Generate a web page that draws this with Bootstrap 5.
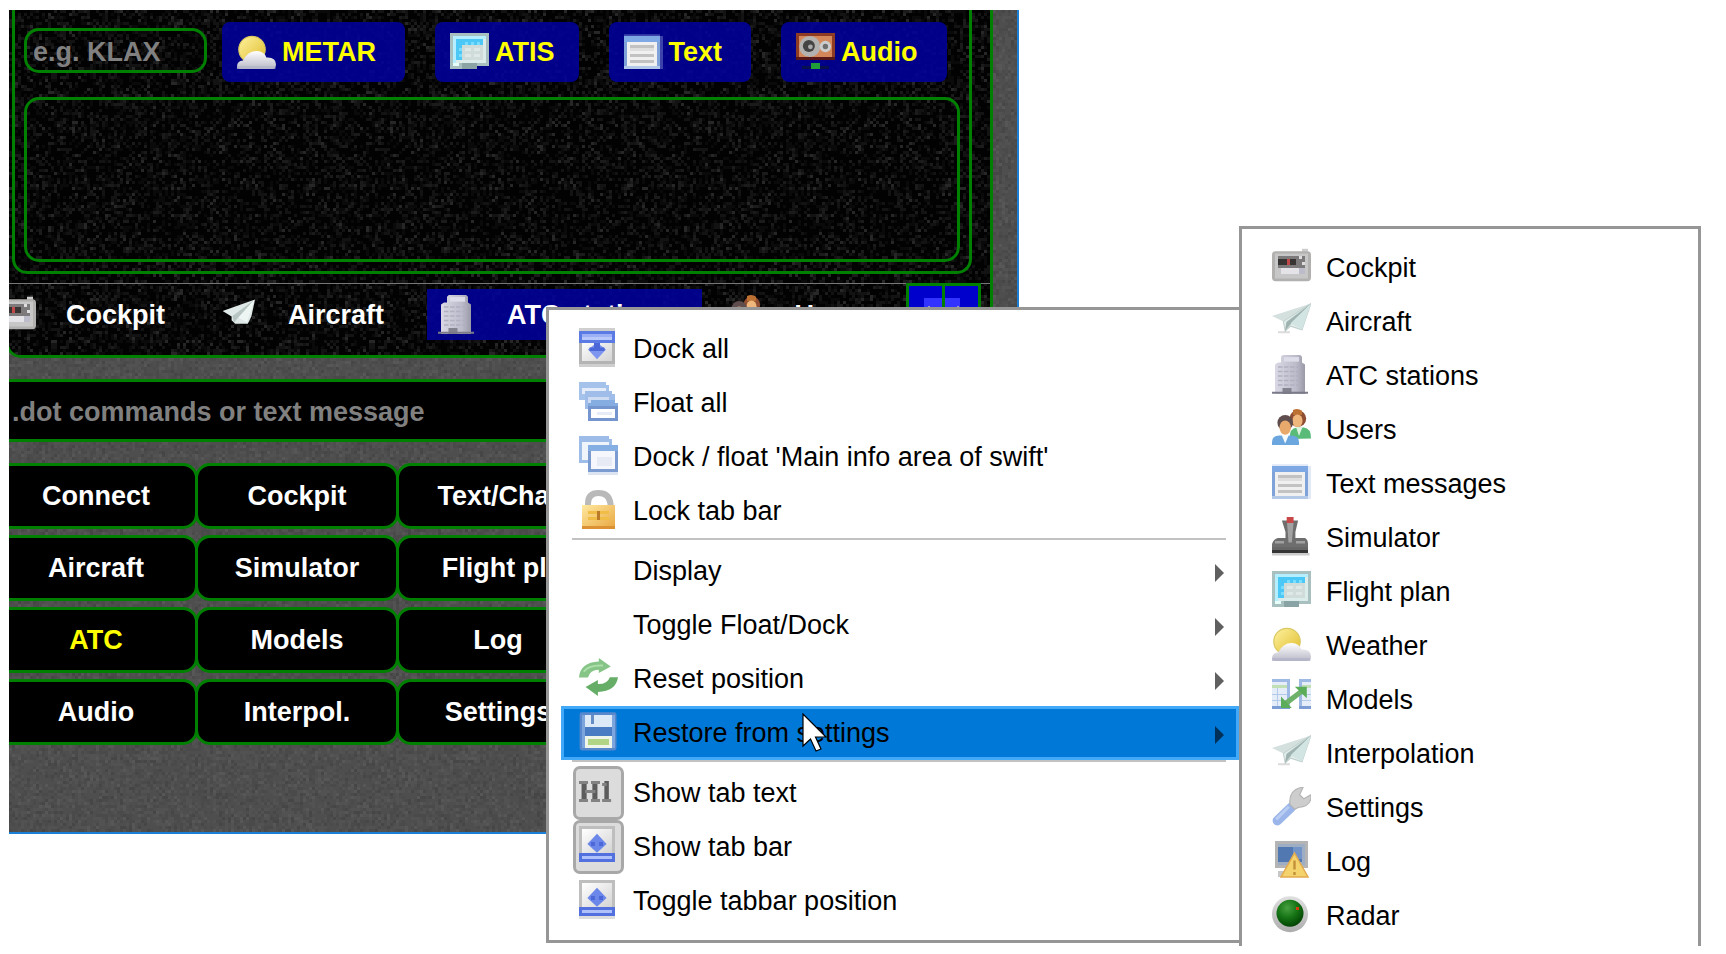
<!DOCTYPE html>
<html lang="en">
<head>
<meta charset="utf-8">
<meta name="viewport" content="width=device-width, initial-scale=1">
<title>swift pilot client</title>
<link href="https://cdn.jsdelivr.net/npm/bootstrap@5.3.0/dist/css/bootstrap.min.css" rel="stylesheet">
<style>
  :root { --line: #008000; --edge: #969696; }
  body { font-family: "Liberation Sans", Arial, sans-serif; font-size: 27px; line-height: 30px; background: #fff; color: #000; min-height: 100vh; overflow: hidden; }
  .pixicon { width: 39px; height: 39px; flex: none; display: block; }
  .texture { position: absolute; inset: 0; width: 100%; height: 100%; z-index: -1; }

  .client { margin: 10px 0 0 9px; max-width: 1010px; border: solid #1c7fd6; border-width: 0 2px 2px 0; padding-bottom: 87px; overflow: hidden; position: relative; z-index: 0; font-weight: 700; }
  .info-frame { margin: 0 24px 0 -3px; padding: 0 18px 0 3px; border: 3px solid var(--line); border-top: 0; border-radius: 0 0 15px 15px; overflow: hidden; position: relative; z-index: 0; background: #000; }
  .station-panel { border: 3px solid var(--line); border-top: 0; border-radius: 0 0 15px 15px; padding: 12px 9px 9px; }
  .station-tools { gap: 30px; }
  .code-field { width: 183px; height: 45px; margin: 6px -15px 0 0; padding: 3px 6px 0; background: transparent; border: 3px solid var(--line); border-radius: 15px; color: #fff; font-weight: 700; }
  .code-field::placeholder, .command-line::placeholder { color: #808080; opacity: 1; }
  .tool-btn { height: 60px; padding: 0 29px 0 15px; gap: 6px; border: 0; border-radius: 8px; background: rgba(0, 0, 160, .86); color: #ff0; font-weight: 700; }
  .report { display: block; width: 100%; height: 165px; margin-top: 15px; background: transparent; border: 3px solid var(--line); border-radius: 15px; resize: none; color: #fff; }
  .tab-strip { margin: 9px -18px 0 -3px; border-top: 1px solid #777; padding: 5px 0 15px; position: relative; }
  .tab-row { margin-left: -23px; gap: 13px; }
  .tab-btn { height: 51px; padding: 0 30px 0 11px; gap: 30px; border: 0; background: transparent; color: #fff; font-weight: 700; white-space: nowrap; flex: none; }
  .tab-btn.active { background: rgba(0, 0, 160, .86); }
  .dock-pair { position: absolute; top: -1px; right: 9px; width: 75px; height: 60px; background: #00c; border: 3px solid var(--line); }
  .dock-pair svg { width: 69px; height: 54px; display: block; }
  .command-line { display: block; width: 1007px; height: 63px; margin: 21px 0 21px -15px; padding: 4px 15px 0; background: #000; border: 3px solid var(--line); border-radius: 15px; color: #fff; font-weight: 700; }
  .page-grid { margin: 0 18px 0 -15px; row-gap: 6px; }
  .page-btn { display: block; width: calc(100% + 3px); height: 66px; padding: 0; background: #000; border: 3px solid var(--line); border-radius: 15px; color: #fff; font-weight: 700; white-space: nowrap; }
  .page-btn.current { color: #ff0; }

  .popup { position: absolute; margin: 0; list-style: none; background: #fff; border: 3px solid var(--edge); padding: 12px 0 12px 12px; }
  .main-popup { left: 546px; top: 307px; width: 696px; z-index: 2; }
  .side-popup { left: 1239px; top: 226px; width: 462px; padding-bottom: 3px; border-bottom: 0; z-index: 3; }
  .entry { display: flex; width: 100%; height: 54px; padding: 6px 15px 0 18px; border: 0; background: transparent; text-align: left; color: #000; line-height: 42px; white-space: nowrap; position: relative; }
  .entry .pixicon, .entry .icon-space { margin-right: 15px; }
  .icon-space { width: 39px; flex: none; }
  .entry .label-text { flex: 1; position: relative; }
  .arrow { width: 9px; height: 18px; margin-top: 14px; fill: #606060; }
  .entry.chosen { background: #0078d7; box-shadow: inset 0 0 0 3px #42a8f8; }
  .entry.chosen .arrow { fill: #003058; }
  .entry.checked::before { content: ""; position: absolute; left: 12px; top: 0; width: 51px; height: 54px; background: #dcdcdc; border: 3px solid #a8a8a8; border-radius: 7px; }
  .entry.checked .pixicon { position: relative; }
  .rule { height: 6px; margin: 0 13px 0 11px; border-top: 2px solid #c2c2c2; }
  .pointer { position: absolute; left: 802px; top: 713px; width: 27px; height: 40px; z-index: 4; pointer-events: none; }
</style>
</head>
<body class="position-relative">

<svg width="0" height="0" class="position-absolute" aria-hidden="true">
  <defs>
    <pattern id="grain-dark" width="318" height="270" patternUnits="userSpaceOnUse"></pattern>
    <pattern id="grain-grey" width="318" height="270" patternUnits="userSpaceOnUse"></pattern>
    <linearGradient id="g-sun" x2="1" y2="1"><stop stop-color="#fff2a0"/><stop offset="1" stop-color="#dfbd2c"/></linearGradient>
    <linearGradient id="g-cloud" x2="0" y2="1"><stop stop-color="#fff"/><stop offset="1" stop-color="#b9b9c8"/></linearGradient>
    <linearGradient id="g-lock" x2="1" y2="1"><stop stop-color="#ffe9a0"/><stop offset="1" stop-color="#e8a640"/></linearGradient>
    <linearGradient id="g-box" x2="1" y2="1"><stop stop-color="#fff"/><stop offset="1" stop-color="#d4d4d4"/></linearGradient>
    <linearGradient id="g-bld" x2="1" y2="0"><stop stop-color="#d9d8e4"/><stop offset=".7" stop-color="#bcbbca"/><stop offset="1" stop-color="#9a99a8"/></linearGradient>
    <radialGradient id="g-radar" cx=".4" cy=".3" r=".7"><stop stop-color="#48a040"/><stop offset=".55" stop-color="#147214"/><stop offset="1" stop-color="#044404"/></radialGradient>
    <linearGradient id="g-ring" x2="0" y2="1"><stop stop-color="#e0e0e0"/><stop offset="1" stop-color="#acacac"/></linearGradient>
  </defs>

  <symbol id="i-weather" viewBox="0 0 13 13">
    <circle cx="5" cy="5.5" r="4.4" fill="url(#g-sun)" stroke="#d9c860" stroke-width=".4"/>
    <path d="M0 11.2Q0 9.4 2 9.2Q3.6 6 6.6 6Q9 6 9.8 8.2Q12.9 8 13 10.4Q13 12 11.5 12H1.4Q0 12 0 11.2z" fill="url(#g-cloud)"/>
    <path d="M0 11H12.800V12H0z" fill="#b4b4c8" opacity=".8"/>
  </symbol>
  <symbol id="i-plan" viewBox="0 0 13 13">
    <g shape-rendering="crispEdges"><path d="M0 0h13v11h-4v1h-5v0h-4z" fill="#a9c0c0"/><path d="M1 1h11v9h-11z" fill="#dcecea"/><path d="M1 1h11v1h-11z" fill="#b4eeff"/><path d="M1 2h1v8h-1z" fill="#b4eeff"/><path d="M2 2h9v2h-7v5h-2z" fill="#4cc8f6"/><path d="M5 3h1v1h-1zM7 3h1v1h-1zM9 3h1v1h-1zM3 5h1v1h-1zM3 7h1v1h-1z" fill="#7adcfe"/><path d="M4 4h7v5h-7z" fill="#cfdcda"/><path d="M5 5h2v1h-2zM8 5h2v1h-2zM5 7h2v1h-2zM8 7h2v1h-2z" fill="#dee8e6"/><path d="M1 10h2v1h-2z" fill="#e6fff8"/><path d="M4 10h5v2h-5z" fill="#8aa3a5"/></g>
  </symbol>
  <symbol id="i-text" viewBox="0 0 13 13">
    <g shape-rendering="crispEdges"><path d="M0 1h12v11h-12z" fill="#7fa2d8"/><path d="M0 1h12v2h-12z" fill="#7da8e4"/><path d="M0 11h12v1h-12z" fill="#b4c8e8"/><path d="M1 3h10v8h-10z" fill="#f0f0f0"/><path d="M2 4h8v1h-8zM2 7h8v1h-8zM2 9h8v1h-8z" fill="#c2c2c2"/><path d="M2 5h8v1h-8z" fill="#dfdfdf"/></g><path d="M12 1h1v11h-1zM0 .4h12v.6h-12z" fill="#a9c0e8" opacity=".35"/>
  </symbol>
  <symbol id="i-audio" viewBox="0 0 13 13">
    <g shape-rendering="crispEdges"><path d="M0 0h13v9h-13z" fill="#8e3d24"/><path d="M1 1h11v7h-11z" fill="#d4875a"/><path d="M0 8h13v1h-13z" fill="#581818"/><path d="M2 11h9v1h-9z" fill="#081050"/><path d="M5 10h3v2h-3z" fill="#209c38"/></g>
    <circle cx="4.6" cy="4.5" r="3.5" fill="#b4b2b0"/><circle cx="4.3" cy="4.3" r="2" fill="#444"/><circle cx="4.8" cy="4.6" r=".8" fill="#aaa"/><circle cx="9.8" cy="4.5" r="1.9" fill="#ccc"/><circle cx="9.8" cy="4.5" r=".9" fill="#6f6f6f"/>
  </symbol>
  <symbol id="i-cockpit" viewBox="0 0 13 13">
    <path d="M10 .6h2v1h-2z" fill="#ccc"/><rect y="1.4" width="13" height="10" rx="1.2" fill="#b2b1b0"/><rect x="1" y="2.2" width="11" height="8.300" fill="#c8c7c7"/>
    <g shape-rendering="crispEdges"><path d="M2 3h9v4h-9z" fill="#7c7a7a"/><path d="M2 4h3v2h-3zM6 4h2v2h-2z" fill="#383434"/><path d="M5 4h1v2h-1z" fill="#c04848"/><path d="M9 3h1v1h-1zM10 5h1v1h-1z" fill="#dedede"/><path d="M3 7h7v2h-7z" fill="#e4e4e8"/><path d="M9 7h2v2h-2z" fill="#bcbccb"/></g>
  </symbol>
  <symbol id="i-plane" viewBox="0 0 13 13">
    <path d="M13 .8L0 5L3.8 6.8z" fill="#d3e0dd"/><path d="M13 .8L3.8 6.8L4.4 10L6.2 8.4L10 9.6z" fill="#e2eeec" stroke="#c0d0cd" stroke-width=".35"/><path d="M13 .8L4.8 7L4.3 10L6 8z" fill="#9fb3b0"/><path d="M13 .8L6.2 7.4L10 9.5z" fill="#d3e5e2"/><path d="M2 10.4h4" stroke="#aaa" stroke-width=".7" opacity=".4"/>
  </symbol>
  <symbol id="i-plane-lit" viewBox="0 0 13 13">
    <path d="M12 1.500L1.200 5.300L4.200 7.200V8.400L5.400 9.600H9.600L10.800 7.200z" fill="#dfe9e7"/><path d="M11.800 1.600L4.500 7L5 9.200L6 8z" fill="#b7c6c3"/><path d="M11.800 1.600L6.500 7.500L9.300 9.200z" fill="#eef6f4"/>
  </symbol>
  <symbol id="i-tower" viewBox="0 0 13 13">
    <path d="M3 2.5V.6L3.600 0H9.400L10 .6V2.5L11 3.200V13H1V3.200L2 2.500z" fill="url(#g-bld)"/>
    <path d="M4 .7h5v1.500h-5z" fill="#ddddea"/><path d="M2 4h8M2 5.500h8M2 7h8M2 8.500h8M2 10h8" stroke="#b1b0c1" stroke-width=".5" stroke-dasharray="1.500 .5"/>
    <path d="M3.500 11h3v2h-3z" fill="#83828f"/><path d="M0 12.600h12" stroke="#7b7a89" stroke-width=".7"/>
  </symbol>
  <symbol id="i-users" viewBox="0 0 13 13">
    <path d="M6 10Q5.6 6.4 8.4 6.2H10.6Q13 6.4 13 9.8z" fill="#58bb78"/><circle cx="8.6" cy="3.2" r="2.8" fill="#8f4d32"/><path d="M7 .3Q8.7-.4 10 .6L10 2H7z" fill="#bc7133"/><ellipse cx="8.5" cy="3.9" rx="1.7" ry="2.1" fill="#efb77c"/><path d="M8 6l1 3 1.2-3z" fill="#dff2df"/>
    <path d="M0 12V11Q0 8.8 2.4 8.8H6.5Q9 8.8 9 11V12z" fill="#6ba7de"/><circle cx="4.4" cy="4.6" r="2.6" fill="#5e4d4c"/><ellipse cx="4.4" cy="6.2" rx="1.9" ry="2.4" fill="#e9a96c"/><path d="M3.2 8.7l1.2 2.8 1.2-2.8z" fill="#f6fbff"/>
  </symbol>
  <symbol id="i-stick" viewBox="0 0 13 13">
    <path d="M3.300 1.200H8.700L7.800 5V7H11Q12 7.500 12 9V10.400H0V9Q.5 7.300 2 7H4.500V5z" fill="#6e6e6e"/><path d="M5 1.800H7.2L6.600 8.500H5.500z" fill="#a2a2a2"/><path d="M4.900 0h2.300v2H4.900z" fill="#c84848"/><path d="M1 8.400h3M8 8.400h3" stroke="#a0a0a0" stroke-width=".8"/><path d="M0 11h12v1H0z" fill="#353535"/><path d="M0 10.500h12" stroke="#666" stroke-width="1"/><path d="M0 12.400h12.500" stroke="#ccc" stroke-width=".8"/>
  </symbol>
  <symbol id="i-models" viewBox="0 0 13 13">
    <g shape-rendering="crispEdges"><path d="M0 0h6v10h-6zM9 0h4v10h-4z" fill="#9db9e4"/><path d="M0 1h5v8h-5zM10 1h3v8h-3z" fill="#e4edf8"/><path d="M0 2h5v1h-5zM10 2h3v1h-3z" fill="#c0dfb4"/><path d="M0 5h5v.4h-5zM0 7h5v.4h-5zM1.6 3h.4v6h-.4zM10 5h3v.4h-3zM10 7h3v.4h-3z" fill="#b4cbea"/><path d="M0 9h6v1h-6zM9 9h4v1h-4z" fill="#7d9ed4"/></g>
    <path d="M4.500 8.200L10 4" stroke="#6db268" stroke-width="1.700"/><path d="M7.600 2.600h4v3.800zM3 5.800v3.900h3.600z" fill="#5cad5a"/>
  </symbol>
  <symbol id="i-wrench" viewBox="0 0 13 13">
    <path d="M1.800 11.2L6.4 6.8" stroke="#9ab5e9" stroke-width="3.200" stroke-linecap="round"/><path d="M1.400 10.800L5.600 6.600" stroke="#b9ccf3" stroke-width="1"/><path d="M6 5.800Q5.400 .8 10.400 0L9.200 2.600L10.600 3.900L13 2.600Q13.300 6.400 8.800 6.800L7.600 7.400z" fill="#cdcdcd" stroke="#b5b5b5" stroke-width=".4"/>
  </symbol>
  <symbol id="i-log" viewBox="0 0 13 13">
    <g shape-rendering="crispEdges"><path d="M1 0h11v9h-11z" fill="#b4b4b4"/><path d="M2 1h9v7h-9z" fill="#9daec4"/><path d="M2 2h8v5h-8z" fill="#5278b2"/><path d="M7 2h3v4h-3z" fill="#7193c6"/><path d="M2 10h3v2h-3z" fill="#c7c7c7"/></g>
    <path d="M7.500 4L12 12H3z" fill="#f4d26c" stroke="#e2ab4e" stroke-width=".5"/><path d="M7.500 6.500v3M7.500 10.300v1" stroke="#c29139" stroke-width=".8"/>
  </symbol>
  <symbol id="i-radar" viewBox="0 0 13 13"><circle cx="6" cy="6.4" r="6" fill="url(#g-ring)"/><circle cx="6" cy="6.1" r="4.500" fill="url(#g-radar)"/><path d="M8 4h1v1h-1z" fill="#d43c10"/></symbol>
  <symbol id="i-dock" viewBox="0 0 13 13">
    <g shape-rendering="crispEdges"><path d="M0 0h12v13h-12z" fill="#cfcfcf"/><path d="M0 4h12v8h-12z" fill="#b4b4b4"/><path d="M1 4h10v7h-10z" fill="url(#g-box)"/><path d="M0 1h12v4h-12z" fill="#5c7ae4"/><path d="M1 2h10v1h-10z" fill="#9cb1f5"/><path d="M1 3h10v1h-10z" fill="#b9c8fa"/></g>
    <path d="M6 4.800L9 7.200L6 10.400L3 7.200z" fill="#7d95ee"/><path d="M5 5h2v1.500h1.500v1.200h-5v-1.200h1.500z" fill="#4c68d8"/>
  </symbol>
  <symbol id="i-undock" viewBox="0 0 13 13">
    <g shape-rendering="crispEdges"><path d="M0 0h12v12h-12z" fill="#bebebe"/><path d="M1 1h10v8h-10z" fill="url(#g-box)"/><path d="M0 9h12v3h-12z" fill="#5271de"/><path d="M1 10h10v1h-10z" fill="#afc1fb"/><path d="M0 12h12v1h-12z" fill="#ddd"/></g>
    <path d="M6 2.600L9.200 6L6 8.900L2.800 6z" fill="#6c87ea"/><path d="M4 5.300h1.300v1.400h-1.300zM6.700 5.300h1.300v1.400h-1.300z" fill="#4c68d8"/>
  </symbol>
  <symbol id="i-float" viewBox="0 0 13 13">
    <g shape-rendering="crispEdges"><path d="M0 0h9v1h1v5h-10z" fill="#a4c2ea"/><path d="M1 2h8v2h-8z" fill="#e3ecf8"/><path d="M2 3h9v1h1v5h-10z" fill="#9fbde8"/><path d="M3 5h7v3h-7z" fill="#cddcf2"/><path d="M3 7h10v6h-10z" fill="#7495cd"/><path d="M4 6h8v1h-8zM3 7h10v1h-10z" fill="#85ade1"/><path d="M4 9h8v3h-8z" fill="#fff"/><path d="M6 10h5v1h-5z" fill="#e5ecf8"/></g>
  </symbol>
  <symbol id="i-windows" viewBox="0 0 13 13">
    <g shape-rendering="crispEdges"><path d="M0 0h10v1h1v8h-11z" fill="#9dbde8"/><path d="M1 2h9v6h-9z" fill="#eff4fb"/><path d="M3 3h10v9h-10z" fill="#7b9bd1"/><path d="M3 3h10v2h-10z" fill="#85aee2"/><path d="M4 5h8v6h-8z" fill="#f5f7fc"/><path d="M6 7h5v3h-5z" fill="#e5eaf5"/><path d="M3 12h10v1h-10z" fill="#dce4f1"/></g>
  </symbol>
  <symbol id="i-lock" viewBox="0 0 13 13">
    <path d="M3 6V4.500Q3 1 6.500 1T10.500 4.500V6" fill="none" stroke="#b9b9b9" stroke-width="2"/>
    <g shape-rendering="crispEdges"><path d="M1 5h11v8h-11z" fill="url(#g-lock)"/><path d="M1 12h11v1h-11z" fill="#dd9135"/><path d="M3 7h3v1h-3zM7 7h3v1h-3zM3 9h3v1h-3zM7 9h3v1h-3z" fill="#f0bd46"/><path d="M6 7h1v3h-1z" fill="#bb7a28"/></g>
  </symbol>
  <symbol id="i-reset" viewBox="0 0 13 13">
    <path d="M0 6.500Q.4 1.500 6.600 1.200V0L10.600 2.800L6.600 5V3.900Q3.600 4 3 6.500z" fill="#86c587"/><path d="M13 6.400Q12.400 11 6.300 11.300V12.700L2.200 9.700L6.300 7.300V8.700Q9.400 8.800 10.300 6.400z" fill="#66ae67"/><path d="M1.600 4.600Q3 2.300 8 2.500" fill="none" stroke="#addfa9" stroke-width=".7"/>
  </symbol>
  <symbol id="i-save" viewBox="0 0 13 13">
    <rect x=".2" y=".1" width="12.300" height="12.700" rx=".8" fill="#5888cc"/><g shape-rendering="crispEdges"><path d="M1 1h11v11h-11z" fill="#7ba5dc"/><path d="M2 1h9v4h-9z" fill="#dce9f6"/><path d="M4 1h1v3h-1z" fill="#668ec4"/><path d="M2 5h9v3h-9z" fill="#4a7cc3"/><path d="M2 8h9v4h-9z" fill="#f0f5e9"/><path d="M3 9h7v2h-7z" fill="#b1d585"/></g>
  </symbol>
  <symbol id="i-heading" viewBox="0 0 13 13">
    <path d="M1.700 3v7M5.300 3v7" stroke="#5c5c5c" stroke-width="1.700"/><path d="M0 3.500h3M0 9.500h3M4 3.500h3M4 9.500h3M2 6.500h3.500" stroke="#828282" stroke-width="1"/><path d="M9.200 3v7" stroke="#5c5c5c" stroke-width="1.500"/><path d="M7.700 4.200h1.500M7.700 9.500h3" stroke="#828282" stroke-width="1"/>
  </symbol>
</svg>

<main class="client">
  <svg class="texture" aria-hidden="true"><rect width="100%" height="100%" fill="url(#grain-grey)"/></svg>

  <section class="info-frame">
    <svg class="texture" aria-hidden="true"><rect width="100%" height="100%" fill="url(#grain-dark)"/></svg>
    <div class="station-panel">
      <div class="station-tools d-flex align-items-start">
        <input class="code-field" type="text" placeholder="e.g. KLAX" aria-label="Airport code">
        <button type="button" class="tool-btn d-flex align-items-center"><svg class="pixicon"><use href="#i-weather"/></svg>METAR</button>
        <button type="button" class="tool-btn d-flex align-items-center pe-4"><svg class="pixicon"><use href="#i-plan"/></svg>ATIS</button>
        <button type="button" class="tool-btn d-flex align-items-center"><svg class="pixicon"><use href="#i-text"/></svg>Text</button>
        <button type="button" class="tool-btn d-flex align-items-center"><svg class="pixicon"><use href="#i-audio"/></svg>Audio</button>
      </div>
      <textarea class="report" aria-label="Station report" readonly></textarea>
    </div>
    <nav class="tab-strip" aria-label="Info areas">
      <div class="tab-row d-flex">
        <button type="button" class="tab-btn d-flex align-items-center"><svg class="pixicon"><use href="#i-cockpit"/></svg>Cockpit</button>
        <button type="button" class="tab-btn d-flex align-items-center"><svg class="pixicon"><use href="#i-plane-lit"/></svg>Aircraft</button>
        <button type="button" class="tab-btn active d-flex align-items-center"><svg class="pixicon"><use href="#i-tower"/></svg>ATC stations</button>
        <button type="button" class="tab-btn d-flex align-items-center"><svg class="pixicon"><use href="#i-users"/></svg>Users</button>
      </div>
      <div class="dock-pair"><svg viewBox="0 0 69 54" aria-hidden="true"><path d="M15 12h36v36H15z" fill="#3333ff"/><path d="M19 21h2M48 21h2" stroke="#99c" stroke-width="2"/><path d="M33 0h3v54h-3z" fill="#008000"/></svg></div>
    </nav>
  </section>

  <input class="command-line" type="text" placeholder=".dot commands or text message" aria-label="Command line">

  <div class="page-grid d-flex flex-column">
    <div class="row row-cols-5 g-0">
      <div class="col"><button type="button" class="page-btn">Connect</button></div>
      <div class="col"><button type="button" class="page-btn">Cockpit</button></div>
      <div class="col"><button type="button" class="page-btn">Text/Chat</button></div>
    </div>
    <div class="row row-cols-5 g-0">
      <div class="col"><button type="button" class="page-btn">Aircraft</button></div>
      <div class="col"><button type="button" class="page-btn">Simulator</button></div>
      <div class="col"><button type="button" class="page-btn">Flight pl.</button></div>
    </div>
    <div class="row row-cols-5 g-0">
      <div class="col"><button type="button" class="page-btn current">ATC</button></div>
      <div class="col"><button type="button" class="page-btn">Models</button></div>
      <div class="col"><button type="button" class="page-btn">Log</button></div>
    </div>
    <div class="row row-cols-5 g-0">
      <div class="col"><button type="button" class="page-btn">Audio</button></div>
      <div class="col"><button type="button" class="page-btn">Interpol.</button></div>
      <div class="col"><button type="button" class="page-btn">Settings</button></div>
    </div>
  </div>
</main>

<ul class="popup main-popup">
  <li><button type="button" class="entry"><svg class="pixicon"><use href="#i-dock"/></svg><span class="label-text">Dock all</span></button></li>
  <li><button type="button" class="entry"><svg class="pixicon"><use href="#i-float"/></svg><span class="label-text">Float all</span></button></li>
  <li><button type="button" class="entry"><svg class="pixicon"><use href="#i-windows"/></svg><span class="label-text">Dock / float 'Main info area of swift'</span></button></li>
  <li><button type="button" class="entry"><svg class="pixicon"><use href="#i-lock"/></svg><span class="label-text">Lock tab bar</span></button></li>
  <li class="rule" role="separator"></li>
  <li><button type="button" class="entry"><span class="icon-space"></span><span class="label-text">Display</span><svg class="arrow" viewBox="0 0 9 18"><path d="M0 0L9 9L0 18z"/></svg></button></li>
  <li><button type="button" class="entry"><span class="icon-space"></span><span class="label-text">Toggle Float/Dock</span><svg class="arrow" viewBox="0 0 9 18"><path d="M0 0L9 9L0 18z"/></svg></button></li>
  <li><button type="button" class="entry"><svg class="pixicon"><use href="#i-reset"/></svg><span class="label-text">Reset position</span><svg class="arrow" viewBox="0 0 9 18"><path d="M0 0L9 9L0 18z"/></svg></button></li>
  <li><button type="button" class="entry chosen" aria-expanded="true"><svg class="pixicon"><use href="#i-save"/></svg><span class="label-text">Restore from settings</span><svg class="arrow" viewBox="0 0 9 18"><path d="M0 0L9 9L0 18z"/></svg></button></li>
  <li class="rule" role="separator"></li>
  <li><button type="button" class="entry checked" aria-pressed="true"><svg class="pixicon"><use href="#i-heading"/></svg><span class="label-text">Show tab text</span></button></li>
  <li><button type="button" class="entry checked" aria-pressed="true"><svg class="pixicon"><use href="#i-undock"/></svg><span class="label-text">Show tab bar</span></button></li>
  <li><button type="button" class="entry"><svg class="pixicon"><use href="#i-undock"/></svg><span class="label-text">Toggle tabbar position</span></button></li>
</ul>

<ul class="popup side-popup">
  <li><button type="button" class="entry"><svg class="pixicon"><use href="#i-cockpit"/></svg><span class="label-text">Cockpit</span></button></li>
  <li><button type="button" class="entry"><svg class="pixicon"><use href="#i-plane"/></svg><span class="label-text">Aircraft</span></button></li>
  <li><button type="button" class="entry"><svg class="pixicon"><use href="#i-tower"/></svg><span class="label-text">ATC stations</span></button></li>
  <li><button type="button" class="entry"><svg class="pixicon"><use href="#i-users"/></svg><span class="label-text">Users</span></button></li>
  <li><button type="button" class="entry"><svg class="pixicon"><use href="#i-text"/></svg><span class="label-text">Text messages</span></button></li>
  <li><button type="button" class="entry"><svg class="pixicon"><use href="#i-stick"/></svg><span class="label-text">Simulator</span></button></li>
  <li><button type="button" class="entry"><svg class="pixicon"><use href="#i-plan"/></svg><span class="label-text">Flight plan</span></button></li>
  <li><button type="button" class="entry"><svg class="pixicon"><use href="#i-weather"/></svg><span class="label-text">Weather</span></button></li>
  <li><button type="button" class="entry"><svg class="pixicon"><use href="#i-models"/></svg><span class="label-text">Models</span></button></li>
  <li><button type="button" class="entry"><svg class="pixicon"><use href="#i-plane"/></svg><span class="label-text">Interpolation</span></button></li>
  <li><button type="button" class="entry"><svg class="pixicon"><use href="#i-wrench"/></svg><span class="label-text">Settings</span></button></li>
  <li><button type="button" class="entry"><svg class="pixicon"><use href="#i-log"/></svg><span class="label-text">Log</span></button></li>
  <li><button type="button" class="entry"><svg class="pixicon"><use href="#i-radar"/></svg><span class="label-text">Radar</span></button></li>
</ul>

<svg class="pointer" viewBox="0 0 27 40" aria-hidden="true"><path d="M1 1V33L8.500 26L14 38L19 36L13.500 24H24z" fill="#fff" stroke="#000" stroke-width="1.200"/></svg>

<script src="https://cdn.jsdelivr.net/npm/bootstrap@5.3.0/dist/js/bootstrap.bundle.min.js"></script>
<script>
  // Fill a pattern with a repeatable grain of square cells, one path per shade.
  function grain(id, base, shades, cell, cols, rows, seed) {
    const random = () => (seed = (seed * 16807) % 2147483647) / 2147483647;
    const paths = shades.map(() => "");
    for (let y = 0; y < rows; y++) {
      for (let x = 0; x < cols; x++) {
        const roll = random();
        let sum = 0;
        for (let k = 0; k < shades.length; k++) {
          sum += shades[k][1];
          if (roll < sum) { paths[k] += `M${x * cell} ${y * cell}h${cell}v${cell}h-${cell}z`; break; }
        }
      }
    }
    document.getElementById(id).innerHTML =
      `<g shape-rendering="crispEdges"><rect width="${cols * cell}" height="${rows * cell}" fill="${base}"/>` +
      shades.map((s, k) => `<path fill="${s[0]}" d="${paths[k]}"/>`).join("") + "</g>";
  }
  grain("grain-dark", "#020202", [["#0a0a0a", .2], ["#131313", .15], ["#1b1b1b", .08], ["#272727", .03]], 3, 106, 90, 4711);
  grain("grain-grey", "#4e4e4e", [["#4a4a4a", .24], ["#525252", .24], ["#464646", .08], ["#575757", .08]], 3, 106, 90, 911);
</script>
</body>
</html>
